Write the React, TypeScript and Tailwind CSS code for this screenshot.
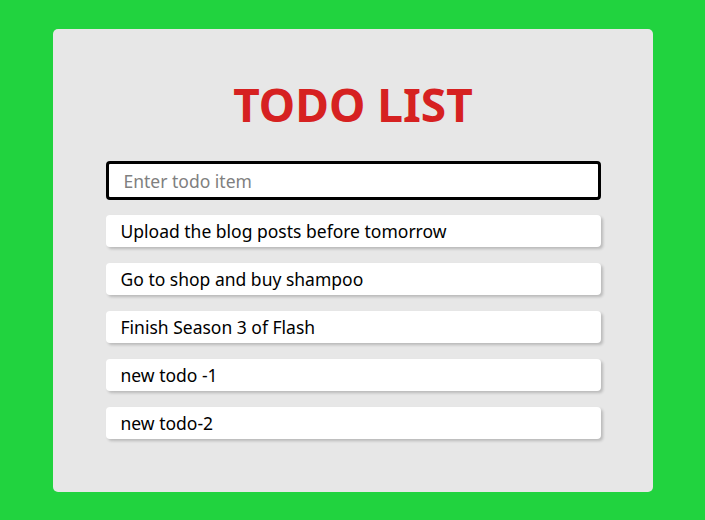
const todos = [
  'Upload the blog posts before tomorrow',
  'Go to shop and buy shampoo',
  'Finish Season 3 of Flash',
  'new todo -1',
  'new todo-2',
];

export default function App() {
  return (
    <main className="min-h-screen bg-[#21d33f] pt-[29px] font-['Noto_Sans',sans-serif]">
      <div className="mx-auto w-[600px] h-[463px] rounded-[5px] bg-[#e7e7e7] pl-[53px] pr-[52px]">
        <h1 className="pt-[45px] text-center text-[46px] font-bold leading-[60px] text-[#d62121]">
          TODO LIST
        </h1>
        <input
          className="mt-[27px] block h-[39px] w-full rounded-[4px] border-[3px] border-black bg-white px-[15px] text-[17.5px] text-black outline-none placeholder:text-[#808080]"
          placeholder="Enter todo item"
        />
        <ul className="mt-[15px] flex flex-col gap-[16px]">
          {todos.map((t) => (
            <li
              key={t}
              className="flex h-[32px] items-center rounded-[4px] bg-white px-[15px] text-[17.5px] text-black shadow-[2px_2px_3px_rgba(0,0,0,0.2)]"
            >
              {t}
            </li>
          ))}
        </ul>
      </div>
    </main>
  );
}
